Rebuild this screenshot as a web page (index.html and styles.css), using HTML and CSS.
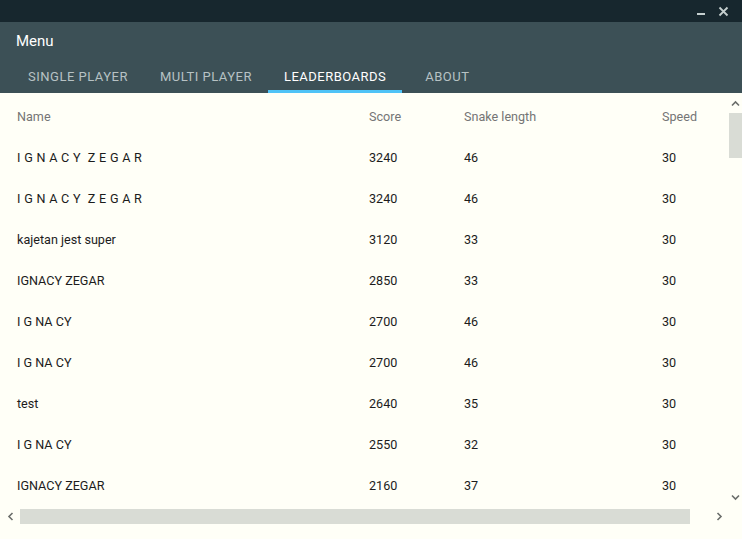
FILE: index.html
```html
<!DOCTYPE html>
<html>
<head>
<meta charset="utf-8">
<link rel="stylesheet" href="styles.css">
</head>
<body>
<div class="window">
  <div class="titlebar">
    <svg class="tb-icon" width="10" height="10" viewBox="0 0 10 10"><rect x="1" y="7" width="8" height="2" fill="#c5cfcf"/></svg>
    <svg class="tb-icon" width="11" height="11" viewBox="0 0 11 11"><path d="M1.5 1.5 L9.5 9.5 M9.5 1.5 L1.5 9.5" stroke="#c5cfcf" stroke-width="1.8"/></svg>
  </div>
  <div class="header">
    <div class="title">Menu</div>
    <div class="tabs">
      <div class="tab">SINGLE PLAYER</div>
      <div class="tab">MULTI PLAYER</div>
      <div class="tab active">LEADERBOARDS</div>
      <div class="tab">ABOUT</div>
    </div>
  </div>
  <div class="content">
    <div class="table">
      <div class="row head"><span>Name</span><span>Score</span><span>Snake length</span><span>Speed</span></div>
      <div class="row"><span class="spaced">I G N A C Y&nbsp;&nbsp;Z E G A R</span><span>3240</span><span>46</span><span>30</span></div>
      <div class="row"><span class="spaced">I G N A C Y&nbsp;&nbsp;Z E G A R</span><span>3240</span><span>46</span><span>30</span></div>
      <div class="row"><span>kajetan jest super</span><span>3120</span><span>33</span><span>30</span></div>
      <div class="row"><span>IGNACY ZEGAR</span><span>2850</span><span>33</span><span>30</span></div>
      <div class="row"><span>I G NA CY</span><span>2700</span><span>46</span><span>30</span></div>
      <div class="row"><span>I G NA CY</span><span>2700</span><span>46</span><span>30</span></div>
      <div class="row"><span>test</span><span>2640</span><span>35</span><span>30</span></div>
      <div class="row"><span>I G NA CY</span><span>2550</span><span>32</span><span>30</span></div>
      <div class="row"><span>IGNACY ZEGAR</span><span>2160</span><span>37</span><span>30</span></div>
    </div>
    <div class="vscroll">
      <svg class="arrow" width="9" height="7" viewBox="0 0 9 7"><path d="M1 5.5 L4.5 2 L8 5.5" fill="none" stroke="#6b6e6b" stroke-width="1.6"/></svg>
      <div class="vthumb"></div>
      <div class="vspacer"></div>
      <svg class="arrow" width="9" height="7" viewBox="0 0 9 7"><path d="M1 1.5 L4.5 5 L8 1.5" fill="none" stroke="#6b6e6b" stroke-width="1.6"/></svg>
    </div>
  </div>
  <div class="hscroll">
    <svg class="harrow" width="7" height="9" viewBox="0 0 7 9"><path d="M5.5 1 L2 4.5 L5.5 8" fill="none" stroke="#6b6e6b" stroke-width="1.6"/></svg>
    <div class="htrack"><div class="hthumb"></div></div>
    <svg class="harrow" width="7" height="9" viewBox="0 0 7 9"><path d="M1.5 1 L5 4.5 L1.5 8" fill="none" stroke="#6b6e6b" stroke-width="1.6"/></svg>
  </div>
</div>
</body>
</html>
```
FILE: styles.css
```css
* { box-sizing: border-box; }
html, body { margin: 0; padding: 0; }
body {
  width: 742px;
  height: 539px;
  overflow: hidden;
  font-family: Roboto, "Liberation Sans", sans-serif;
  background: #fffff7;
}
.window {
  display: flex;
  flex-direction: column;
  height: 539px;
}
.titlebar {
  height: 22px;
  background: #17272e;
  display: flex;
  justify-content: flex-end;
  align-items: center;
  gap: 12px;
  padding-right: 13px;
}
.tb-icon { display: block; }
.header {
  height: 71px;
  background: #3c5056;
  display: flex;
  flex-direction: column;
}
.title {
  color: #ffffff;
  font-size: 15px;
  padding: 10px 0 0 16px;
  height: 41px;
}
.tabs {
  display: flex;
  padding-left: 12px;
  height: 30px;
}
.tab {
  min-width: 90px;
  padding: 0 16px;
  text-align: center;
  font-size: 13px;
  letter-spacing: 0.5px;
  color: #b7c2c4;
  line-height: 28px;
  border-bottom: 3px solid transparent;
}
.tab.active {
  color: #ffffff;
  border-bottom-color: #4fc3f7;
}
.content {
  flex: 1;
  display: flex;
  min-height: 0;
}
.table {
  flex: 1;
  padding-top: 3px;
  overflow: hidden;
}
.row {
  display: grid;
  grid-template-columns: 352px 95px 198px 60px;
  padding-left: 17px;
  height: 41px;
  align-items: center;
  font-size: 12.6px;
  color: #1c1c1c;
}
.row.head { color: #757575; }
.spaced { letter-spacing: 0.3px; }
.vscroll {
  width: 13px;
  display: flex;
  flex-direction: column;
  align-items: center;
  padding-top: 7px;
  padding-bottom: 2px;
}
.arrow { display: block; flex: none; }
.vthumb {
  width: 13px;
  height: 45px;
  background: #d9dcd5;
  margin-top: 6px;
}
.vspacer { flex: 1; }
.hscroll {
  height: 36px;
  display: flex;
  align-items: flex-start;
  padding-top: 6px;
}
.harrow { display: block; margin: 3px 6px 0 7px; }
.htrack {
  width: 686px;
  height: 15px;
}
.hthumb {
  width: 670px;
  height: 15px;
  background: #d9dcd5;
}
.hscroll .harrow:last-child { margin-left: 10px; }
```
